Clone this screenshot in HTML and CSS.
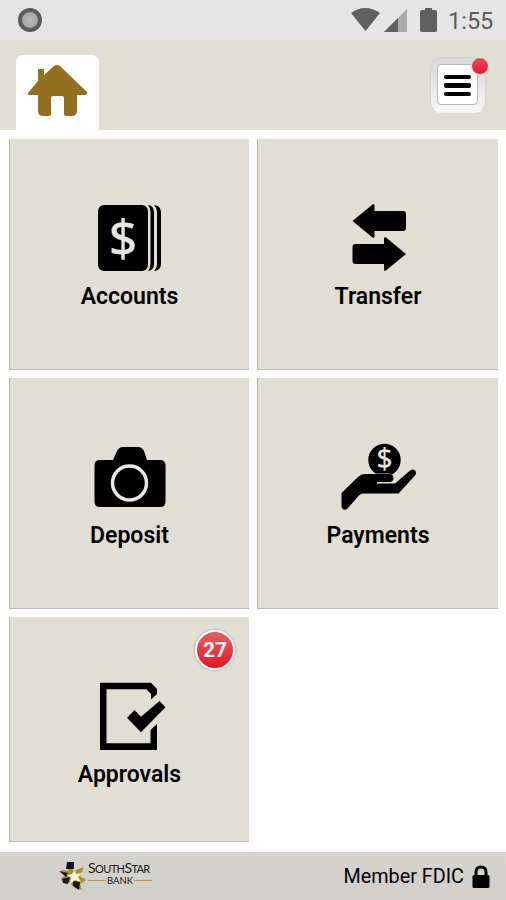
FILE: index.html
```html
<!DOCTYPE html>
<html lang="en">
<head>
    <meta charset="UTF-8">
    <meta name="viewport" content="width=device-width, initial-scale=1.0">
    <title>SouthStar Bank</title>
    <link rel="stylesheet" href="styles.css">
</head>
<body>
    <div class="status-bar">
        <span class="record"></span>
        <svg class="status-icons" width="90" height="40" viewBox="0 0 90 40">
            <path d="M3 13Q17 3 32 13L17.500 31Z" fill="#606060"/>
            <path d="M59 9V32H36Z" fill="#aaa"/>
            <path d="M50 18V32H36Z" fill="#606060"/>
            <path d="M77 8h7v2h3q2 0 2 2v18q0 2-2 2H74q-2 0-2-2V12q0-2 2-2h3Z" fill="#606060"/>
        </svg>
        <span class="time">1:55</span>
    </div>

    <header class="header">
        <a class="home-tab">
            <svg width="60" height="54" viewBox="0 0 60 54">
                <path d="M10 17V6q0-1 1-1h4q1 0 1 1v5L26 2q3-2 6 0L59 28q1 3-2 3h-8V47q0 5-5 5H38q-2 0-2-2V34q0-2-2-2H25q-2 0-2 2V50q0 2-2 2H15q-5 0-5-5V31H2q-3 0-2-2Z" fill="#946f20"/>
            </svg>
        </a>
        <button class="menu-button">
            <span class="menu-inner">
                <span class="line"></span>
                <span class="line"></span>
                <span class="line"></span>
            </span>
            <span class="dot"></span>
        </button>
    </header>

    <main class="grid">
        <a class="tile">
            <svg class="icon" viewBox="0 0 80 70">
                <rect x="9" y="2" width="50" height="66" rx="6"/>
                <path d="M59 2q6 1 6 7V61q0 6-6 7 2.500-3 2.500-7V9q0-4-2.500-7Z"/>
                <path d="M65 2q7 1 7 7V61q0 6-7 7 3-3 3-7V9q0-4-3-7Z"/>
                <path d="M62 2q4.500 2 4.500 7V61q0 5-4.500 7" class="page-gap"/>
                <text class="dollar" x="34" y="52.500">$</text>
            </svg>
            <span class="label">Accounts</span>
        </a>
        <a class="tile">
            <svg class="icon" viewBox="0 0 80 70">
                <path d="M14.500 18 34.500 1.500q2-1 2 1V8H65q3 0 3 3V25q0 3-3 3H36.500v5.500q0 2-2 1Z"/>
                <path d="M68 51 48 34.500q-2-1-2 1V41H17.500q-3 0-3 3V58q0 3 3 3H46v5.500q0 2 2 1Z"/>
            </svg>
            <span class="label">Transfer</span>
        </a>
        <a class="tile">
            <svg class="icon" viewBox="0 0 80 70">
                <path d="M11 18H24L28 9q2-4 6-4H49q4 0 6 4L58 18H71q5.500 0 5.500 5.500V59.500q0 5.500-5.500 5.500H11q-5.500 0-5.500-5.500V23.500q0-5.500 5.500-5.500Z"/>
                <circle class="lens" cx="40.500" cy="41" r="17"/>
            </svg>
            <span class="label">Deposit</span>
        </a>
        <a class="tile">
            <svg class="icon" viewBox="0 0 80 70">
                <circle cx="46.500" cy="18" r="16.200"/>
                <path class="hand" d="M3.500 51 20 35Q23 32 27 32H51.500q4 0 4 4 0 3-3 4H39v1.500H57L72 28.500q3-2 5 0 2 2 0 5L60.500 51.500H25q-2 0-4 2L9.500 66.500q-2 2-4 1-2-1-2-3Z"/>
                <text class="dollar small" x="46.500" y="26.500">$</text>
            </svg>
            <span class="label">Payments</span>
        </a>
        <a class="tile">
            <svg class="icon" viewBox="0 0 80 70">
                <path d="M11 1.700H62L68 8V13L62 18.500V13L57.500 8.300H17.500V62.300H61.500V49L68 43V69H11Z"/>
                <path d="M38 36.700 45.500 29 52 35.700 70.500 20 76.500 26.300 52 51.300Z"/>
            </svg>
            <span class="label">Approvals</span>
            <span class="badge">27</span>
        </a>
    </main>

    <footer class="footer">
        <div class="logo">
            <svg class="star" width="30" height="30" viewBox="0 0 30 30">
                <path d="M9 3h6v7l11-4-4 9 6 4-6 4 2 6-8-3-5-5-5 1-3-5 6-3-6-3 1-2 6 1Z" fill="#b18b31"/>
                <path d="M9 1h7v7H8ZM1 10l9 2-2 4ZM4 18l8-2-2 7-5-1ZM15 20l7 1-1 8-6-4Z" fill="#151515"/>
                <path d="m17 9 1 4 6-1-4 4 3 5-6-2-5 4 1-6-4-3 5-1Z" fill="#fff7df"/>
            </svg>
            <div class="wordmark">
                <div class="name">S<small>OUTH</small>S<small>TAR</small></div>
                <div class="bank">BANK</div>
            </div>
        </div>
        <div class="fdic">
            <span>Member FDIC</span>
            <svg width="18" height="24" viewBox="0 0 18 24">
                <path d="M4 11V7q0-5 5-5t5 5v4" fill="none" stroke="#000" stroke-width="3"/>
                <rect x="0.500" y="10" width="17" height="13" rx="1.500"/>
            </svg>
        </div>
    </footer>
</body>
</html>
```
FILE: styles.css
```css
body {
    font-family: Roboto, Arial, sans-serif;
    margin: 0;
    height: 900px;
    background-color: #fff;
    color: #000;
    display: flex;
    flex-direction: column;
    overflow: hidden;
}
.status-bar {
    height: 40px;
    background-color: #e5e5e5;
    display: flex;
    align-items: center;
    padding: 0 12px 0 18px;
}
.record {
    width: 16px;
    height: 16px;
    border: 4px solid #5b5b5b;
    border-radius: 50%;
    background: radial-gradient(#bbb, #999);
    margin-right: auto;
}
.status-icons {
    margin-right: 10px;
}
.time {
    width: 46px;
    margin-top: 2px;
    font-size: 23.5px;
    color: #5c5c5c;
    white-space: nowrap;
}
.header {
    height: 90px;
    box-sizing: border-box;
    background-color: #e1dfd3;
    display: flex;
    justify-content: space-between;
    align-items: flex-start;
    padding: 15px 20px 0 16px;
}
.home-tab {
    width: 83px;
    height: 75px;
    box-sizing: border-box;
    padding: 9px 0 0 12px;
    background-color: #fff;
    border-radius: 7px 7px 0 0;
}
.menu-button {
    position: relative;
    width: 56px;
    height: 56px;
    margin-top: 2px;
    padding: 6px 7px 8px 6px;
    border: 1px solid #d4d3ce;
    border-bottom-color: #f5f5f3;
    border-radius: 11px;
    background: linear-gradient(#dadada, #f6f6f6);
}
.menu-inner {
    display: flex;
    flex-direction: column;
    justify-content: center;
    align-items: center;
    gap: 4px;
    height: 41px;
    box-sizing: border-box;
    padding-top: 2px;
    border: 1px solid #b8b8b8;
    border-radius: 4px;
    background-color: #fff;
}
.line {
    width: 27px;
    height: 4.5px;
    border-radius: 2px;
    background-color: #000;
}
.dot {
    position: absolute;
    top: -1px;
    right: -4px;
    width: 16px;
    height: 16px;
    border: 1px solid #f6dede;
    border-radius: 50%;
    background: linear-gradient(#e84a57, #e01c2c);
}
.grid {
    flex: 1;
    display: grid;
    grid-template-columns: 240px 241px;
    grid-template-rows: 231px 231px 225px;
    column-gap: 8px;
    row-gap: 8px;
    padding: 9px 8px 0 9px;
}
.tile {
    position: relative;
    display: flex;
    flex-direction: column;
    align-items: center;
    box-sizing: border-box;
    padding-top: 64px;
    background-color: #e1dfd4;
    border-left: 1px solid #b5b5b0;
    border-bottom: 1.5px solid #bdbcb6;
}
.icon {
    width: 80px;
    height: 70px;
    margin-left: -1px;
}
.page-gap {
    fill: none;
    stroke: #e1dfd4;
    stroke-width: 1;
}
.dollar {
    font-family: "Noto Sans", sans-serif;
    font-size: 50px;
    font-weight: 500;
    text-anchor: middle;
    fill: #e5e4dd;
}
.dollar.small {
    font-size: 28px;
}
.lens {
    fill: none;
    stroke: #e8e7e1;
    stroke-width: 3.5;
}
.hand {
    stroke: #e1dfd4;
    stroke-width: 1;
    paint-order: stroke;
}
.label {
    margin-top: 8px;
    font-size: 23px;
    line-height: 32px;
    font-weight: 600;
}
.badge {
    position: absolute;
    top: 13px;
    right: 14px;
    width: 36px;
    height: 36px;
    border: 2px solid #fff;
    border-radius: 50%;
    background: linear-gradient(#e76064, #e4161f);
    box-shadow: 0 0 0 1.5px #c9c7bf;
    color: #fff;
    font-size: 21px;
    line-height: 37px;
    font-weight: 700;
    text-align: center;
}
.footer {
    height: 48px;
    background: linear-gradient(#d5d4cf, #cfcec9);
    display: flex;
    align-items: center;
    justify-content: space-between;
    padding: 0 16px 0 58px;
}
.logo {
    display: flex;
    align-items: center;
    color: #171717;
}
.wordmark {
    width: 64px;
    margin-top: -4px;
}
.name {
    font-family: Lato, sans-serif;
    font-size: 14px;
    line-height: 12px;
    letter-spacing: -0.6px;
    white-space: nowrap;
}
.name small {
    font-size: 11px;
}
.bank {
    display: flex;
    align-items: center;
    gap: 1px;
    font-family: Lato, sans-serif;
    font-size: 9.5px;
    line-height: 11px;
}
.bank::before,
.bank::after {
    content: "";
    flex: 1;
    height: 1px;
    background-color: #b69a52;
}
.fdic {
    display: flex;
    align-items: center;
    gap: 8px;
    margin-top: 1px;
    font-size: 19.8px;
    white-space: nowrap;
}
```
